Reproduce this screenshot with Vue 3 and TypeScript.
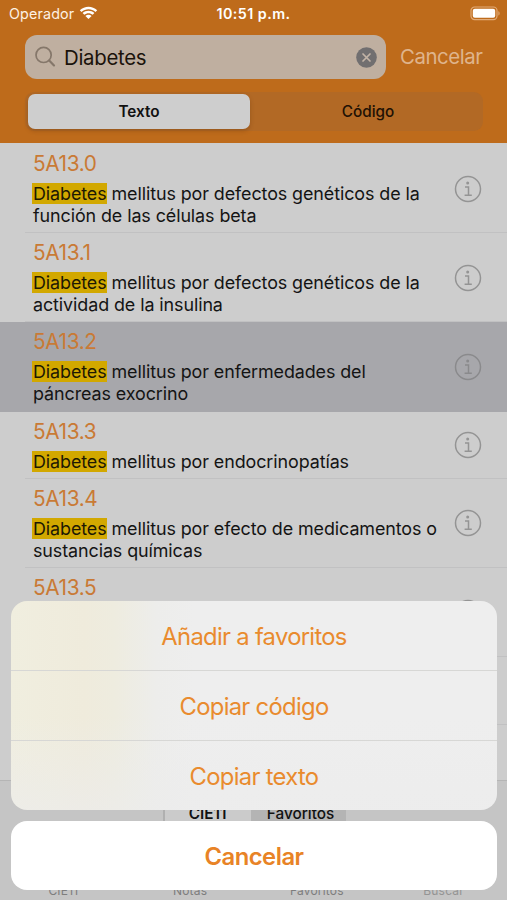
<script setup lang="ts">
interface Result {
  code: string
  match: string
  rest: string
  size: 'tall' | 'short'
  selected?: boolean
}

const results: Result[] = [
  { code: '5A13.0', match: 'Diabetes', rest: ' mellitus por defectos genéticos de la función de las células beta', size: 'tall' },
  { code: '5A13.1', match: 'Diabetes', rest: ' mellitus por defectos genéticos de la actividad de la insulina', size: 'tall' },
  { code: '5A13.2', match: 'Diabetes', rest: ' mellitus por enfermedades del páncreas exocrino', size: 'tall', selected: true },
  { code: '5A13.3', match: 'Diabetes', rest: ' mellitus por endocrinopatías', size: 'short' },
  { code: '5A13.4', match: 'Diabetes', rest: ' mellitus por efecto de medicamentos o sustancias químicas', size: 'tall' },
  { code: '5A13.5', match: '', rest: '', size: 'tall' },
  { code: '', match: '', rest: '', size: 'short' },
]
const actions: string[] = ['Añadir a favoritos', 'Copiar código', 'Copiar texto']
const tabs: string[] = ['CIE11', 'Notas', 'Favoritos', 'Buscar']
</script>

<template>
  <div class="phone">
    <header class="header">
      <div class="status">
        <div class="carrier">
          <span>Operador</span>
          <svg class="wifi" width="19" height="15" viewBox="0 0 19 15">
            <path d="M.8 5.2C5.6.5 13.4.5 18.2 5.2L16.5 7C12.6 3.2 6.4 3.2 2.5 7Z" />
            <path d="M3.6 8.1C6.9 4.9 12.1 4.9 15.4 8.1L13.7 9.8C11.3 7.6 7.7 7.6 5.3 9.8Z" />
            <path d="M6.4 11C8.1 9.4 10.9 9.4 12.6 11L9.5 14.1Z" />
          </svg>
        </div>
        <span class="time">10:51 p.m.</span>
        <svg class="battery" width="31" height="15" viewBox="0 0 31 15">
          <rect x="1" y="1" width="26" height="12.6" rx="3.6" fill="none" stroke="#e2ab78" stroke-width="1.2" />
          <rect x="2.8" y="2.8" width="22.4" height="9" rx="2" fill="#fff" />
          <path d="M28.4 5.2C30 5.7 30 8.9 28.4 9.4Z" fill="#e2ab78" />
        </svg>
      </div>
      <div class="search-row">
        <div class="search">
          <svg width="22" height="22" viewBox="0 0 22 22" fill="none" stroke="#85776a">
            <circle cx="8.6" cy="8.9" r="7.6" stroke-width="1.7" />
            <path d="M14.2 14.5L19 19.4" stroke-width="2.2" stroke-linecap="round" />
          </svg>
          <span class="query">Diabetes</span>
          <svg class="clear" width="21" height="21" viewBox="0 0 21 21">
            <circle cx="10.5" cy="10.5" r="10.3" fill="#716f70" />
            <path d="M7 7L14 14M14 7L7 14" stroke="#c3b4a7" stroke-width="1.7" stroke-linecap="round" />
          </svg>
        </div>
        <span class="cancel">Cancelar</span>
      </div>
      <div class="segments">
        <span class="segment active">Texto</span>
        <span class="segment">Código</span>
      </div>
    </header>

    <main class="list">
      <article v-for="(r, i) in results" :key="i" class="row" :class="[r.size, { selected: r.selected }]">
        <div class="body">
          <div class="code">{{ r.code }}</div>
          <p class="desc"><mark v-if="r.match">{{ r.match }}</mark>{{ r.rest }}</p>
        </div>
        <svg v-if="r.code" class="info" width="28" height="28" viewBox="0 0 28 28">
          <circle cx="14" cy="14" r="12.5" fill="none" stroke="currentColor" stroke-width="1.5" />
          <circle cx="13.7" cy="8.1" r="1.5" fill="currentColor" />
          <path d="M11 12H14.5V20M10.6 20.2H17.8" fill="none" stroke="currentColor" stroke-width="1.5" />
        </svg>
      </article>
    </main>

    <footer class="footer">
      <div class="scope">
        <span class="scope-item on">CIE11</span>
        <span class="scope-item">Favoritos</span>
      </div>
      <nav class="tabs">
        <span v-for="t in tabs" :key="t" class="tab">{{ t }}</span>
      </nav>
    </footer>

    <div class="overlay">
      <div class="sheet">
        <button v-for="a in actions" :key="a" class="action">{{ a }}</button>
      </div>
      <button class="dismiss">Cancelar</button>
    </div>
  </div>
</template>

<style>
body {
  margin: 0;
  overflow: hidden;
}
</style>

<style scoped>
.phone {
  position: relative;
  display: flex;
  flex-direction: column;
  width: 507px;
  height: 900px;
  overflow: hidden;
  background: #cdcdcd;
  font-family: Inter, "Liberation Sans", sans-serif;
  color: #141414;
}
.header {
  box-sizing: border-box;
  flex: none;
  height: 143px;
  background: #be6b1b;
}
.status {
  display: grid;
  grid-template-columns: 1fr auto 1fr;
  align-items: center;
  height: 27px;
  padding: 0 6px 0 9px;
  color: #fdf1e4;
  font-size: 14.3px;
  letter-spacing: 0.15px;
}
.carrier {
  display: flex;
  align-items: center;
  gap: 5px;
}
.wifi {
  fill: #fff;
  margin-top: -2px;
}
.time {
  margin-right: 3px;
  letter-spacing: 0.45px;
  font-weight: 600;
  color: #fff;
}
.battery {
  justify-self: end;
}
.search-row {
  display: flex;
  align-items: center;
  margin-top: 8px;
  padding-left: 25px;
}
.search {
  box-sizing: border-box;
  display: flex;
  align-items: center;
  width: 361px;
  height: 44px;
  padding: 0 9px 0 10px;
  border-radius: 12px;
  background: #bfafa0;
}
.query {
  flex: 1;
  margin-left: 7px;
  font-size: 20.4px;
  letter-spacing: -0.3px;
  color: #1b130b;
}
.cancel {
  margin: -2px 0 0 14px;
  font-size: 20.4px;
  letter-spacing: -0.45px;
  color: #dfb48c;
}
.segments {
  display: flex;
  box-sizing: border-box;
  width: 458px;
  height: 39px;
  margin: 13px 0 0 25px;
  padding: 2px 0 2px 3px;
  border-radius: 9px;
  background: #b26925;
}
.segment {
  flex: 1;
  display: flex;
  align-items: center;
  justify-content: center;
  padding-left: 3px;
  border-radius: 7px;
  font-size: 15.3px;
  font-weight: 500;
  color: #211104;
}
.segment.active {
  flex: none;
  width: 222px;
  padding: 0;
  font-weight: 600;
  background: #cecece;
  color: #111;
  box-shadow: 0 2px 4px rgba(70, 30, 0, 0.25);
}
.list {
  flex: none;
  height: 637px;
  overflow: hidden;
}
.row {
  box-sizing: border-box;
  display: flex;
  align-items: center;
  height: 89.2px;
  padding: 0 25px 0 33px;
  background: linear-gradient(#c1c1c2, #c1c1c2) 25px 100% / 100% 1px no-repeat;
  color: #949494;
}
.row:first-child {
  height: 90.2px;
  padding-top: 1px;
}
.row.short {
  height: 67.3px;
}
.row.selected {
  background: #a7a7ab;
  color: #8a8a8c;
}
.body {
  align-self: flex-start;
  width: 409px;
  flex: none;
  padding-top: 7px;
}
.code {
  height: 26px;
  line-height: 26px;
  font-size: 20.8px;
  letter-spacing: -0.35px;
  color: #c97a35;
}
.desc {
  margin: 6px 0 0;
  font-size: 17.9px;
  letter-spacing: -0.085px;
  line-height: 22px;
  color: #141414;
}
mark {
  margin-left: -1px;
  padding-left: 1px;
  background: #d2a800;
  color: #1d1803;
}
.info {
  margin-left: 12px;
  flex: none;
}
.footer {
  flex: 1;
  border-top: 1px solid #b5b5b5;
  background: #c5c5c5;
}
.scope {
  display: flex;
  margin: 15px 0 0 163px;
}
.scope-item {
  box-sizing: border-box;
  width: 95px;
  height: 36px;
  line-height: 36px;
  padding-left: 4px;
  text-align: center;
  font-size: 15.3px;
  font-weight: 500;
  background: #b4b4b4;
  color: #111;
}
.scope-item.on {
  width: 88px;
  padding: 0 1px 0 0;
  font-weight: 600;
  background: #cbcbcb;
  border-left: 2px solid #b0b0b0;
}
.tabs {
  display: grid;
  grid-template-columns: repeat(4, 1fr);
  margin-top: 51px;
  line-height: 16px;
  font-size: 12px;
  letter-spacing: 0.2px;
  text-align: center;
  color: #7d7d7d;
}
.tab:last-child {
  color: #949494;
}
.overlay {
  position: absolute;
  left: 11px;
  right: 10px;
  bottom: 10px;
  display: flex;
  flex-direction: column;
  gap: 11px;
}
.sheet {
  display: flex;
  flex-direction: column;
  height: 209px;
  overflow: hidden;
  border-radius: 16px;
  background:
    linear-gradient(rgba(238, 238, 238, 0) 55%, rgba(236, 236, 236, 0.65)),
    linear-gradient(90deg, #f0eedf 0, #efebdc 15%, #eeecdf 21%, #ededeb 30%, #eee 38%);
}
.action,
.dismiss {
  margin: 0;
  padding: 2px 0 0;
  border: 0;
  background: none;
  font: 400 23.8px Inter, "Liberation Sans", sans-serif;
  letter-spacing: -0.7px;
  color: #e98b2e;
}
.action {
  flex: 1;
}
.action + .action {
  border-top: 1px solid #d7d7d5;
}
.dismiss {
  height: 69px;
  padding: 1px 0 0;
  border-radius: 16px;
  background: #fff;
  color: #e88326;
  font-weight: 600;
  letter-spacing: -0.5px;
}
</style>
